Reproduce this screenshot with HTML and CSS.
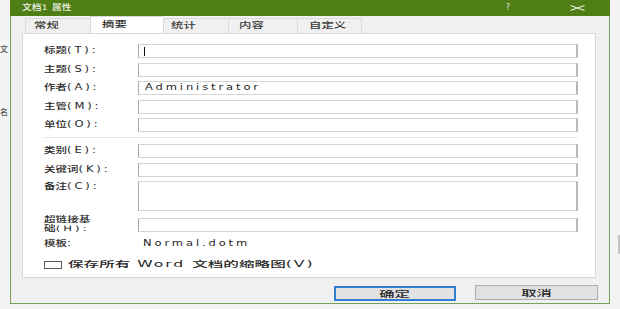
FILE: index.html
```html
<!DOCTYPE html>
<html lang="zh-CN">
<head>
<meta charset="utf-8">
<title>文档1 属性</title>
<link rel="stylesheet" href="styles.css">
</head>
<body>
<div class="screen">
  <div class="bg-left">
    <span class="frag frag-1">文</span>
    <span class="frag frag-2">名</span>
  </div>
  <div class="dialog">
    <div class="titlebar">
      <span class="sx title">文档<span class="l">1 </span>属性</span>
      <span class="help">?</span>
      <span class="close"><svg width="15" height="6" viewBox="0 0 15 6"><path d="M0.5 0.5 L14.5 5.5 M14.5 0.5 L0.5 5.5" stroke="#e8efe0" stroke-width="1.1" fill="none"/></svg></span>
    </div>
    <div class="body">
      <div class="tabs">
        <div class="tab tab-1"><span class="sx">常规</span></div>
        <div class="tab tab-2 active"><span class="sx">摘要</span></div>
        <div class="tab tab-3"><span class="sx">统计</span></div>
        <div class="tab tab-4"><span class="sx">内容</span></div>
        <div class="tab tab-5"><span class="sx">自定义</span></div>
      </div>
      <div class="panel">
        <div class="fields">
          <span class="lbl"><span class="sx">标题<span class="l">(T):</span></span></span>
          <span class="input"><span class="caret"></span></span>
          <span class="lbl"><span class="sx">主题<span class="l">(S):</span></span></span>
          <span class="input"></span>
          <span class="lbl"><span class="sx">作者<span class="l">(A):</span></span></span>
          <span class="input"><span class="sx val l">Administrator</span></span>
          <span class="lbl"><span class="sx">主管<span class="l">(M):</span></span></span>
          <span class="input"></span>
          <span class="lbl"><span class="sx">单位<span class="l">(O):</span></span></span>
          <span class="input"></span>
        </div>
        <div class="sep"></div>
        <div class="fields">
          <span class="lbl"><span class="sx">类别<span class="l">(E):</span></span></span>
          <span class="input"></span>
          <span class="lbl"><span class="sx">关键词<span class="l">(K):</span></span></span>
          <span class="input"></span>
          <span class="lbl lbl-top"><span class="sx">备注<span class="l">(C):</span></span></span>
          <span class="input textarea"></span>
          <span class="lbl lbl-two"><span class="sx">超链接基<br>础<span class="l">(H):</span></span></span>
          <span class="input input-link"></span>
        </div>
        <div class="tmpl">
          <span class="tmpl-lbl"><span class="sx">模板:</span></span>
          <span class="tmpl-val"><span class="sx l">Normal.dotm</span></span>
        </div>
        <div class="chk">
          <span class="box"></span>
          <span class="sx sx-wide">保存所有<span class="l"> Word </span>文档的缩略图<span class="l">(V)</span></span>
        </div>
      </div>
      <div class="buttons">
        <div class="btn btn-default"><span class="sx sx-btn">确定</span></div>
        <div class="btn"><span class="sx sx-btn">取消</span></div>
      </div>
    </div>
  </div>
  <div class="bg-right"><span class="scrollbit"></span></div>
</div>
</body>
</html>
```
FILE: styles.css
```css
* { box-sizing: border-box; }
html, body { margin: 0; padding: 0; }
body {
  width: 620px;
  height: 309px;
  overflow: hidden;
  background: #f4f4f4;
  font-family: "DejaVu Sans", "Noto Sans CJK SC", sans-serif;
  font-size: 8px;
  line-height: 10px;
  color: #262626;
  font-weight: 500;
}
.screen {
  display: flex;
  width: 620px;
  height: 309px;
}
.sx {
  display: inline-block;
  transform: scaleX(1.44);
  transform-origin: 0 50%;
  white-space: nowrap;
}
.l { letter-spacing: 2px; font-weight: normal; }

/* background behind the dialog */
.bg-left {
  width: 10px;
  display: flex;
  flex-direction: column;
  align-items: flex-start;
  background: #f4f4f4;
}
.frag {
  font-size: 8px;
  line-height: 9px;
  color: #555;
  white-space: nowrap;
}
.frag-1 { margin-top: 45px; }
.frag-2 { margin-top: 54px; }
.bg-right {
  flex: 1;
  display: flex;
  flex-direction: column;
  align-items: flex-end;
  background: #f4f4f4;
}
.scrollbit {
  width: 2px;
  height: 19px;
  margin-top: 235px;
  background: #c4c4c4;
}

/* dialog */
.dialog {
  width: 600px;
  height: 304px;
  border: 1px solid #72a35a;
  border-top: none;
  background: #f0f0f0;
  display: flex;
  flex-direction: column;
}
.titlebar {
  height: 16px;
  margin: 0 -1px;
  background: #4e7e15;
  color: #eef3e8;
  display: flex;
  align-items: center;
  padding-left: 12px;
}
.title { font-size: 7.5px; transform: scaleX(1.3); }
.title .l { letter-spacing: 0.5px; }
.help {
  margin-left: auto;
  margin-right: 60px;
  font-size: 8px;
  color: #e0e8d8;
}
.close {
  display: flex;
  margin-right: 25px;
}
.body {
  flex: 1;
  display: flex;
  flex-direction: column;
  padding: 2px 11px 0 11px;
}

/* tabs */
.tabs {
  display: flex;
  height: 15px;
  margin-left: 3px;
}
.tab {
  height: 15px;
  border: 1px solid #d9d9d9;
  border-right: none;
  border-bottom: none;
  padding-left: 8px;
  color: #3a3a3a;
  display: flex;
  align-items: center;
  background: #f0f0f0;
}
.tab-5 { border-right: 1px solid #d9d9d9; }
.tab .sx { transform: scaleX(1.55); }
.tab-1 { width: 65px; }
.tab-2 { width: 73px; padding-left: 11px; }
.tab-3 { width: 65px; padding-left: 7px; }
.tab-4 { width: 69px; padding-left: 10px; }
.tab-5 { width: 65px; padding-left: 11px; }
.tab.active {
  background: #fff;
  height: 17px;
  margin-top: -2px;
  margin-bottom: -1px;
  position: relative;
  z-index: 1;
  color: #262626;
}

/* panel */
.panel {
  width: 574px;
  height: 245px;
  background: #fff;
  border: 1px solid #d9d9d9;
  padding: 10px 17px 0 21px;
  display: flex;
  flex-direction: column;
}
.fields {
  display: grid;
  grid-template-columns: 94px 1fr;
  grid-auto-rows: auto;
  row-gap: 4.5px;
  align-items: center;
}
.lbl { white-space: nowrap; }
.lbl-top { align-self: start; margin-top: 1px; }
.lbl-two { align-self: start; margin-top: -1px; line-height: 9px; font-size: 7.5px; }
.lbl-two .sx { transform: scaleX(1.55); }
.input {
  height: 14px;
  border: 1px solid #d4d4d4;
  border-left-color: #a9a9a9;
  border-right: 2px solid #b6b6be;
  background: #fff;
  display: flex;
  align-items: center;
  padding-left: 5px;
}
.textarea { height: 30px; }
.input-link { margin-top: 1.5px; }
.caret {
  width: 1px;
  height: 9px;
  background: #111;
}
.val { color: #262626; margin-left: 1px; }
.sep {
  height: 1px;
  background: #e6e6e6;
  margin: 5px 0 6px 0;
}
.tmpl {
  display: flex;
  margin-top: 6px;
  height: 10px;
}
.tmpl-lbl { width: 99px; }
.tmpl-val { color: #262626; }
.chk {
  display: flex;
  align-items: center;
  margin-top: 11px;
  height: 10px;
}
.box {
  width: 18px;
  height: 8px;
  border: 1px solid #5a5a5a;
  background: #fff;
  margin-right: 6px;
}
.sx-wide { transform: scaleX(1.95); }
.sx-wide .l { letter-spacing: 1px; }

/* buttons */
.buttons {
  display: flex;
  justify-content: flex-end;
  gap: 19px;
  margin-top: 7px;
  padding-right: 0;
}
.btn {
  width: 122px;
  height: 15px;
  background: #e1e1e1;
  border: 1px solid #adadad;
  display: flex;
  align-items: center;
  justify-content: center;
  color: #262626;
}
.btn-default {
  border: 2px solid #2f7fd0;
  margin-top: 1px;
}
.btn:last-child { width: 123px; }
.sx-btn { transform: scaleX(1.8); transform-origin: 50% 50%; font-size: 8.5px; }
```
